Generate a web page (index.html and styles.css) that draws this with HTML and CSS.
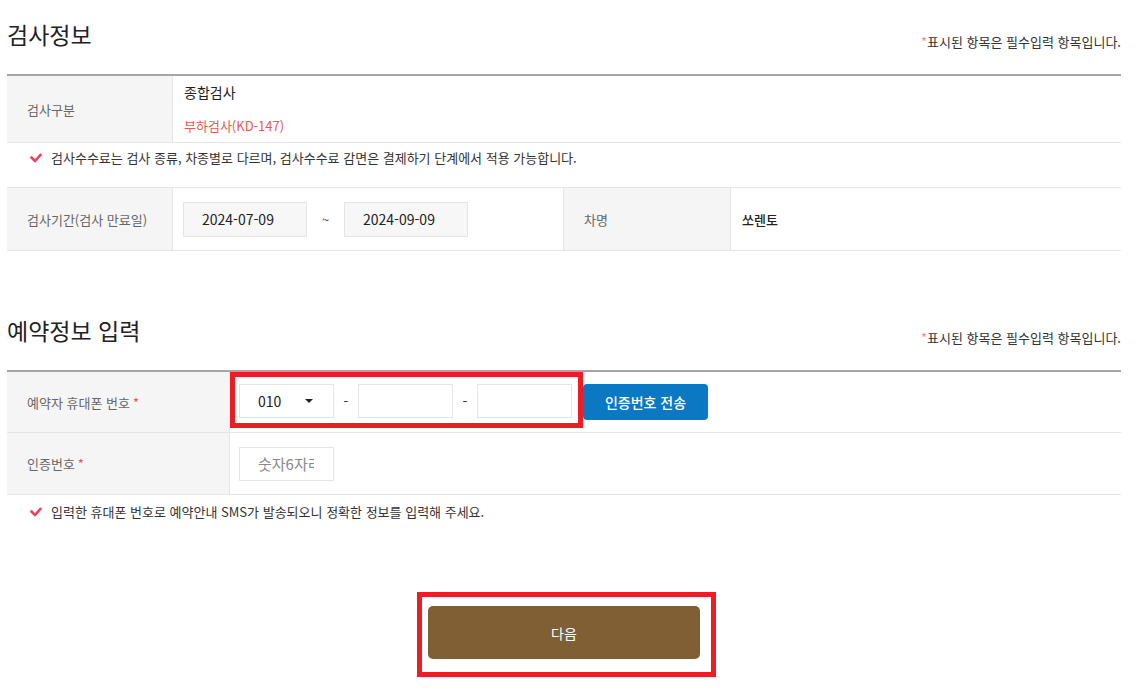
FILE: index.html
```html
<!DOCTYPE html>
<html lang="ko">
<head>
<meta charset="UTF-8" />
<title>검사예약</title>
<link rel="stylesheet" href="styles.css">
</head>
<body>
<div class="wrap">
    <div class="sec-head">
        <h2>검사정보</h2>
        <p class="req"><em>*</em>표시된 항목은 필수입력 항목입니다.</p>
    </div>
    <div class="info">
        <div class="row row-kind">
            <div class="th">검사구분</div>
            <div class="td kind">
                <p class="kind-main">종합검사</p>
                <p class="kind-sub">부하검사(KD-147)</p>
            </div>
        </div>
        <p class="notice first">
            <svg class="chk" width="12" height="10" viewBox="0 0 12 10"><polyline points="1.5,4.5 5,8 10.5,1.8" /></svg>
            검사수수료는 검사 종류, 차종별로 다르며, 검사수수료 감면은 결제하기 단계에서 적용 가능합니다.
        </p>
        <div class="row row-period">
            <div class="th">검사기간(검사 만료일)</div>
            <div class="td period">
                <span class="date">2024-07-09</span>
                <span class="tilde">~</span>
                <span class="date">2024-09-09</span>
            </div>
            <div class="th th-mid">차명</div>
            <div class="td car">쏘렌토</div>
        </div>
    </div>

    <div class="sec-head sec2">
        <h2>예약정보 입력</h2>
        <p class="req"><em>*</em>표시된 항목은 필수입력 항목입니다.</p>
    </div>
    <div class="info form">
        <div class="row row-phone">
            <div class="th th-wide">예약자 휴대폰 번호 <em>*</em></div>
            <div class="td phone">
                <div class="mark phone-box">
                    <div class="sel">010<i class="arrow"></i></div>
                    <span class="dash">-</span>
                    <input class="txt" type="text" />
                    <span class="dash">-</span>
                    <input class="txt" type="text" />
                </div>
                <button class="btn-send" type="button">인증번호 전송</button>
            </div>
        </div>
        <div class="row row-code">
            <div class="th th-wide">인증번호 <em>*</em></div>
            <div class="td code">
                <input class="txt code-txt" type="text" placeholder="숫자6자리" />
            </div>
        </div>
    </div>
    <p class="notice second">
        <svg class="chk" width="12" height="10" viewBox="0 0 12 10"><polyline points="1.5,4.5 5,8 10.5,1.8" /></svg>
        입력한 휴대폰 번호로 예약안내 SMS가 발송되오니 정확한 정보를 입력해 주세요.
    </p>

    <div class="btn-area">
        <div class="mark next-box">
            <button class="btn-next" type="button">다음</button>
        </div>
    </div>
</div>
</body>
</html>
```

FILE: styles.css
```css
*{margin:0;padding:0;box-sizing:border-box;}
body{font-family:"Noto Sans CJK KR","Noto Sans",sans-serif;color:#333;background:#fff;}
em{font-style:normal;}
.wrap{width:1114px;margin-left:7px;}

/* section title */
.sec-head{display:flex;justify-content:space-between;align-items:flex-start;height:74px;}
.sec-head h2{margin-top:17px;font-size:23px;line-height:34px;font-weight:400;color:#222;}
.sec-head .req{margin-top:33px;font-size:13px;line-height:18px;color:#333;}
.sec-head .req em{color:#f08a8a;}
.sec2{margin-top:45px;}

/* table */
.info{border-top:2px solid #a6a6a6;}
.row{display:flex;border-bottom:1px solid #e6e6e6;}
.th{flex:none;width:166px;display:flex;align-items:center;padding-left:20px;background:#f5f5f5;border-right:1px solid #e6e6e6;font-size:13px;color:#666;}
.th em{color:#e8546a;margin-left:3px;}
.td{display:flex;align-items:center;font-size:14px;color:#222;}

.row-kind{height:67px;}
.kind{flex-direction:column;align-items:flex-start;padding-left:11px;}
.kind p{height:33px;line-height:33px;}
.kind-main{font-size:14px;}
.kind-sub{font-size:13px;color:#e85a4f;}

.notice{display:flex;align-items:center;font-size:13px;line-height:18px;color:#333;padding-left:23px;}
.notice .chk{margin-right:9px;}
.chk polyline{fill:none;stroke:#ec4259;stroke-width:2.6;stroke-linecap:round;stroke-linejoin:round;}
.notice.first{height:45px;align-items:flex-start;padding-top:6px;border-bottom:1px solid #e6e6e6;}
.notice.first .chk{margin-top:4px;}
.notice.second{padding-top:8px;}

.row-period{height:63px;}
.period{flex:none;width:390px;padding-left:10px;}
.date{width:124px;height:35px;line-height:33px;padding-left:18px;border:1px solid #e5e5e5;background:#f7f7f7;font-size:14px;color:#222;}
.tilde{width:37px;text-align:center;font-size:13px;color:#444;}
.th-mid{width:168px;border-left:1px solid #e6e6e6;}
.car{flex:1;padding-left:11px;font-size:13px;font-weight:500;}

/* reservation form */
.th-wide{width:223px;}
.row-phone{height:61px;}
.phone{flex:1;}
.mark{border:5px solid #ee1c25;}
.phone-box{align-self:flex-start;display:flex;align-items:center;padding:7px 6px 5px 4px;}
.sel{width:95px;height:34px;display:flex;align-items:center;justify-content:space-between;padding:0 20px 0 18px;border:1px solid #e5e5e5;background:#fff;font-size:14px;color:#222;}
.arrow{width:0;height:0;border-left:4px solid transparent;border-right:4px solid transparent;border-top:4px solid #222;}
.dash{width:24px;text-align:center;font-size:14px;color:#333;}
.txt{width:95px;height:34px;padding:0 12px 0 18px;border:1px solid #e5e5e5;background:#fff;font-family:inherit;font-size:14px;color:#222;outline:none;}
.txt::placeholder{color:#888;}
.code-txt{font-size:15px;padding-right:19px;}
.btn-send{width:125px;height:36px;border:0;border-radius:4px;background:#0b78c3;color:#fff;font-family:inherit;font-size:14px;font-weight:500;}

.row-code{height:62px;}
.code{padding-left:9px;}

/* next */
.btn-area{display:flex;justify-content:center;margin-top:71px;}
.next-box{margin-left:5px;padding:9px 11px 13px 6px;}
.btn-next{display:block;width:272px;height:53px;border:0;border-radius:5px;background:#7f5f33;color:#fff;font-family:inherit;font-size:14px;}
```
